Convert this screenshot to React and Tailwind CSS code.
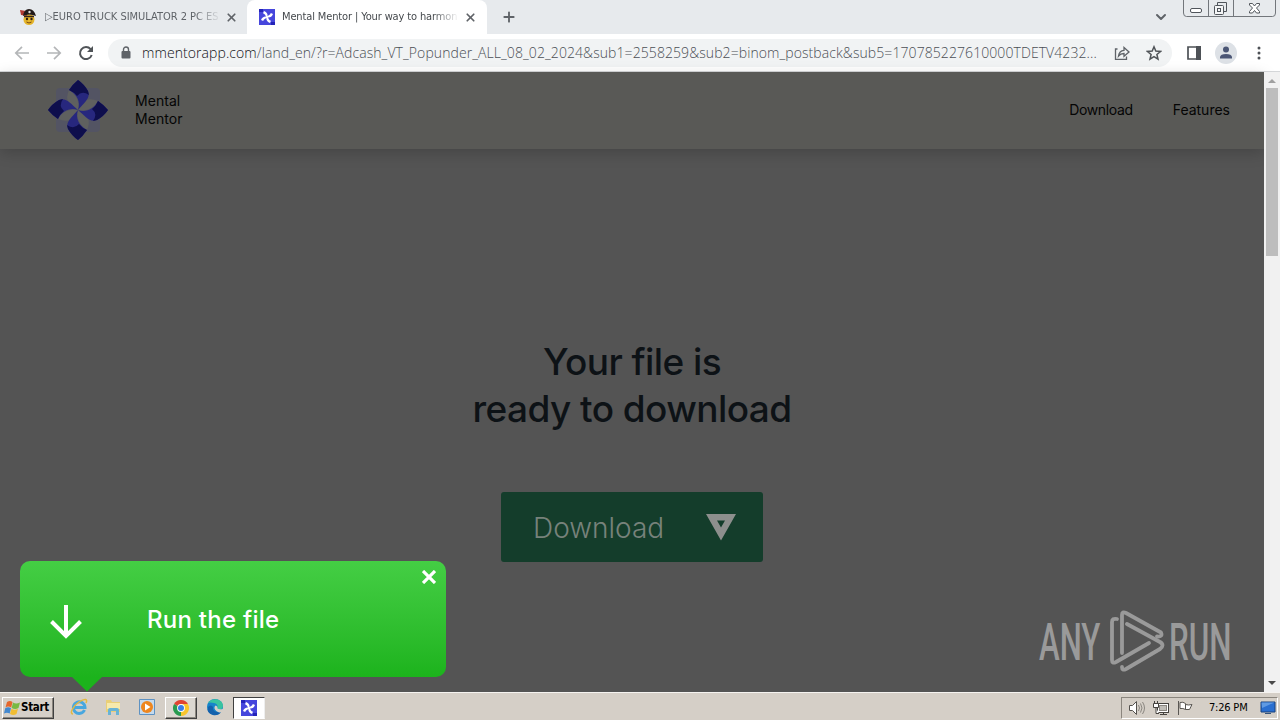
import { ChevronDown, Plus, X } from 'lucide-react';

const UI = 'font-["DejaVu_Sans_Condensed","DejaVu_Sans",sans-serif]';

const TURNS = [0, 90, 180, 270];

function Pinwheel({ className }) {
  return (
    <svg viewBox="0 0 60 60" className={className}>
      <rect x="8" y="8" width="44" height="44" rx="4" fill="#51536a" opacity=".7" />
      {TURNS.map(a => (
        <path key={a} d="M30 30C32 22 28 14 21 10Q18 17 20 22Q24 27 30 30Z" fill="#5f605f" transform={`rotate(${a} 30 30)`} />
      ))}
      {TURNS.map(a => (
        <g key={a} transform={`rotate(${a} 30 30)`}>
          <path d="M30 30C33 22 29 14 21 10Q25 4 30 0Q36 4 40 11C43 18 36 23 30 30Z" fill="#27277e" />
          <path d="M21 10Q25 4 30 0Q36 4 40 11L41 15Q34 10 29 16Q26 12 21 10Z" fill="#0e0e4c" />
        </g>
      ))}
    </svg>
  );
}

function AppBadge({ className }) {
  return (
    <svg viewBox="0 0 16 16" className={className}>
      <rect width="16" height="16" fill="#4646dc" />
      <path d="M0 0h4v3H0zM12 13h4v3h-4z" fill="#2424b8" />
      {TURNS.map(a => (
        <path key={a} d="M8.300 8.300C9.300 5.500 7.800 3 5 2L4 4.200C6 4.800 6.500 6.500 7.300 8.300Z" fill="#fff" transform={`rotate(${a} 8 8)`} />
      ))}
    </svg>
  );
}

function PirateIcon() {
  return (
    <svg viewBox="0 0 18 18" className="w-[18px] h-[18px] shrink-0">
      <circle cx="10" cy="11.500" r="5.500" fill="#e5b52b" />
      <path d="M1 2l6 1 1 5-6-1z" fill="#b13a32" />
      <path d="M4 8Q5 1 10 1Q15 1 17 8Q10 5 4 8Z" fill="#221a18" />
      <path d="M5 8.500h10" stroke="#362317" strokeWidth="1.500" />
      <circle cx="8" cy="11" r="1.200" fill="#2b1c10" />
      <circle cx="12.500" cy="11" r="1.200" fill="#2b1c10" />
      <path d="M7.500 14q2.500 2 5 0" stroke="#7a4a14" fill="none" />
      <circle cx="10.500" cy="4" r="1.200" fill="#ddd" />
    </svg>
  );
}

function TabStrip() {
  return (
    <div className="h-[34px] bg-[#e7eaed] flex items-start">
      <div className="w-[247px] h-[34px] pl-[19px] flex items-center">
        <PirateIcon />
        <div className="ml-2 w-[176px] whitespace-nowrap text-[11px] tracking-[-0.02px] text-[#5f6368] mask-r-from-85%">▷EURO TRUCK SIMULATOR 2 PC ES</div>
        <X className="ml-[4px] w-[13px] h-[13px] shrink-0 text-[#5f6368]" strokeWidth={3.2} />
      </div>
      <div className="w-[240px] h-[34px] bg-white rounded-t-lg pl-3 flex items-center">
        <AppBadge className="w-4 h-4 shrink-0" />
        <div className="ml-[7px] w-[177px] whitespace-nowrap text-[11px] tracking-[-0.13px] text-[#45494d] mask-r-from-85%">Mental Mentor | Your way to harmon</div>
        <X className="ml-[5px] w-[13px] h-[13px] shrink-0 text-[#5f6368]" strokeWidth={3.2} />
      </div>
      <Plus className="ml-3.5 mt-[9px] w-4 h-4 text-[#5f6368]" strokeWidth={2.8} />
      <div className="flex-1" />
      <ChevronDown className="mt-[9px] mr-[14px] w-4 h-4 text-[#5f6368]" strokeWidth={3} />
      <svg viewBox="0 0 94 18" className="w-[94px] h-[18px] mr-[3px]" fill="none" stroke="#72767b">
        <path d="M.5 0v13q0 3.500 3 3.500h86q3 0 3-3.500V0M25.500 0v16M50.500 0v16" />
        <g stroke="#50555b">
          <rect x="7.500" y="8.500" width="11" height="4" rx="1.500" fill="#fff" />
          <path d="M34.500 5V2.500h9v9H41" />
          <rect x="31.500" y="5.500" width="9" height="9" rx="1" fill="#f4f5f6" />
          <rect x="34.500" y="8.500" width="3" height="3" />
          <path d="M66.500 3.500h3l2 2.500 2-2.500h3v1.500L73.500 8l3 3.500v1.500h-3l-2-2.500-2 2.500h-3v-1.500l3-3.500-3-3z" fill="#fff" />
        </g>
      </svg>
    </div>
  );
}

function Toolbar() {
  return (
    <div className="h-[38px] bg-white border-b border-[#d5d7d9] flex items-center pl-[14px]">
      <svg viewBox="0 0 16 16" className="w-4 h-4" fill="none" stroke="#b4b6b8" strokeWidth="1.700"><path d="M15 8H2M8 1.800L1.800 8 8 14.200" /></svg>
      <svg viewBox="0 0 16 16" className="ml-4 w-4 h-4" fill="none" stroke="#b4b6b8" strokeWidth="1.700"><path d="M1 8h13M8 1.800L14.200 8 8 14.200" /></svg>
      <svg viewBox="0 0 16 16" className="ml-4 w-4 h-4" fill="none" stroke="#505458" strokeWidth="2"><path d="M13.700 10A6 6 0 1 1 12.600 4.200" /><path d="M15 1v6H9z" fill="#505458" stroke="none" /></svg>
      <div className="ml-[14px] w-[1064px] h-7 rounded-full bg-[#f1f3f4] flex items-center pl-[13px]">
        <svg viewBox="0 0 10 13" className="w-[10px] h-[13px] shrink-0"><rect x=".5" y="5" width="9" height="7.500" rx="1" fill="#5f6368" /><path d="M2.500 5.500V3.500a2.500 2.500 0 0 1 5 0v2" fill="none" stroke="#5f6368" strokeWidth="1.400" /></svg>
        <div className='ml-[11px] w-[960px] whitespace-nowrap font-["Open_Sans",sans-serif] font-light text-[14px] tracking-[0.08px] text-[#4b4f54]'>
          <span className="text-[#101114]">mmentorapp.com</span>/land_en/?r=Adcash_VT_Popunder_ALL_08_02_2024&sub1=2558259&sub2=binom_postback&sub5=170785227610000TDETV4232...
        </div>
        <svg viewBox="0 0 16 16" className="ml-[12px] w-4 h-4 shrink-0" fill="none" stroke="#5f6368" strokeWidth="1.300"><path d="M3.500 4H1.500v10.300h11V11.500" /><path d="M4.500 11C5 7 7 5.500 10 5.300V2.500l5 4.500-5 4.300V8.500C7.500 8.500 6 9 4.500 11Z" /></svg>
        <svg viewBox="0 0 16 16" className="ml-4 w-4 h-4 shrink-0" fill="none" stroke="#505458" strokeWidth="1.500"><path d="M8 1.800l1.800 4.300 4.700.4-3.600 3 1.100 4.600L8 11.600l-4 2.500 1.100-4.600-3.600-3 4.700-.4z" /></svg>
      </div>
      <svg viewBox="0 0 14 14" className="ml-[15px] w-[14px] h-[14px]"><path d="M1 1h12v12H1z" fill="none" stroke="#4d5156" strokeWidth="1.700" /><path d="M9 0h5v14H9z" fill="#4d5156" /></svg>
      <svg viewBox="0 0 22 22" className="ml-[14px] w-[22px] h-[22px]"><circle cx="11" cy="11" r="11" fill="#dde1e6" /><circle cx="11" cy="7.500" r="3" fill="#4b5675" /><path d="M5 16.500v-1.500Q5.500 12 11 12T17 15v1.500z" fill="#4b5675" /></svg>
      <svg viewBox="0 0 4 14" className="ml-[20px] w-[4px] h-[14px] fill-[#4d5156]"><circle cx="2" cy="2" r="1.500" /><circle cx="2" cy="7" r="1.500" /><circle cx="2" cy="12" r="1.500" /></svg>
    </div>
  );
}

function Landing() {
  return (
    <main className='flex-1 bg-[#545454] text-[#050505] font-["Inter",sans-serif]'>
      <header className="h-[77px] bg-[#595956] shadow-[0_4px_14px_rgba(0,0,0,0.18)] flex items-center pl-12 pr-[34px] pb-[2px]">
        <Pinwheel className="w-[60px] h-[60px]" />
        <div className="ml-[27px] text-[14px] leading-[18px] tracking-[0.05px]">Mental<br />Mentor</div>
        <nav className="ml-auto flex gap-10 text-[14px]">
          <span className="tracking-[-0.35px]">Download</span>
          <span>Features</span>
        </nav>
      </header>
      <section className="flex flex-col items-center pt-[189px]">
        <h1 className="text-center text-[37px] leading-[47px] tracking-[-0.58px] font-medium text-[#0d1216]">Your file is<br />ready to download</h1>
        <button className="mt-[60px] w-[262px] h-[70px] rounded-[3px] bg-[#143d2b] flex items-center justify-between pl-8 pr-[27px] text-[#77827b]">
          <span className="text-[28px] font-light mt-[2px]">Download</span>
          <svg viewBox="0 0 30 27" className="w-[30px] h-[27px]"><path fillRule="evenodd" d="M0 0h30L15 26.500zM11 6.500l4 7 4-7z" fill="#8d8f8d" /></svg>
        </button>
      </section>
    </main>
  );
}

function Scrollbar() {
  return (
    <div className="w-4 bg-[#f1f1f1] flex flex-col items-center">
      <svg viewBox="0 0 16 16" className="w-4 h-4"><path d="M4 11h8L8 7z" fill="#a0a0a0" /></svg>
      <div className="w-[12px] h-[168px] bg-[#bdbdbd]" />
      <div className="flex-1" />
      <svg viewBox="0 0 16 16" className="w-4 h-4"><path d="M4 5h8L8 9z" fill="#4a4a4a" /></svg>
    </div>
  );
}

function Balloon() {
  return (
    <div className="absolute left-[20px] top-[561px] w-[426px]">
      <div className='relative h-[116px] rounded-[10px] bg-linear-to-b from-[#44ce44] to-[#1cb31c] text-white font-["Inter",sans-serif] flex items-center pl-[30px]'>
        <svg viewBox="0 0 32 34" className="w-8 h-[34px] mt-[6px]" fill="none" stroke="#fff" strokeWidth="4"><path d="M16 0v31M1.500 16.500L16 31l14.500-14.500" /></svg>
        <span className="ml-[65px] mt-[1px] text-[24px] tracking-[0.25px] font-medium">Run the file</span>
        <svg viewBox="0 0 14 14" className="absolute right-[10px] top-[9px] w-[14px] h-[14px]" stroke="#fff" strokeWidth="3.200"><path d="M1 1l12 12M13 1L1 13" /></svg>
      </div>
      <svg viewBox="0 0 30 15" className="ml-[52px] w-[30px] h-[15px]"><path d="M0 0h30L15 14.500z" fill="#1cb31c" /></svg>
    </div>
  );
}

function Watermark() {
  return (
    <svg viewBox="0 0 194 62" className="absolute left-[1038px] top-[610px] w-[194px] h-[62px]">
      <g fill="#9a9a9a" className='font-["Roboto",sans-serif] font-medium' fontSize="52">
        <text transform="translate(1 49.500) scale(.59 1)" textLength="104" lengthAdjust="spacingAndGlyphs">ANY</text>
        <text transform="translate(131 49.500) scale(.59 1)" textLength="106" lengthAdjust="spacingAndGlyphs">RUN</text>
      </g>
      <g fill="none" stroke="#9a9a9a" strokeWidth="3.800" strokeLinejoin="round" strokeLinecap="round">
        <path d="M84 43V5Q84 1 88 3L123 22.500Q125 27 119 26.500" />
        <path d="M79 9Q74 8 74 12V50Q74 54 78 52L111 33" />
        <path d="M84 57Q84 61 88 59L122 39Q127 35 122 32L89 14" />
      </g>
    </svg>
  );
}

function WindowsFlag() {
  return (
    <svg viewBox="0 0 16 16" className="w-4 h-4">
      <path d="M3 2q3-2 5.500 0L7.200 7.500Q4 5.500 1.500 7.500z" fill="#e5672d" />
      <path d="M9 2.500q3 2 7 0l-1.500 5.500Q11 10 7.700 8z" fill="#78b943" />
      <path d="M1.200 8.200q3-2 5.800 0l-1.300 5.300Q3 12 0 13.500z" fill="#4388cf" />
      <path d="M7.500 8.700q3 2 6.500 0L12.500 14q-3 2-6.500 0z" fill="#f1bd32" />
    </svg>
  );
}

function Taskbar() {
  return (
    <footer className="h-7 bg-[#d5cfc7] border-t border-[#f5f3f0] flex items-center">
      <button className="ml-[2px] mt-[2px] w-[52px] h-[22px] border border-t-white border-l-white border-b-[#404040] border-r-[#404040] shadow-[inset_-1px_-1px_0_#8b867e] flex items-center pl-[1px] text-[11.500px] font-bold text-black">
        <WindowsFlag />
        <span className="ml-[1px] tracking-[-0.3px]">Start</span>
      </button>
      <svg viewBox="0 0 18 18" className="ml-[16px] w-[18px] h-[18px]" fill="none">
        <path d="M14.500 12A5.800 5.800 0 1 1 15 9.500H5" stroke="#48a7df" strokeWidth="3" />
        <path d="M3 16C-1 16 3 8 9 4C15 0 18 1 16 5" stroke="#e3b940" strokeWidth="1.500" />
      </svg>
      <svg viewBox="0 0 18 18" className="ml-4 w-[18px] h-[18px]">
        <path d="M2 2h5l1 2h8v10H2z" fill="#e9cf77" /><path d="M3 5h13v6H3z" fill="#f6e9ac" />
        <path d="M4 17v-5q0-2 2-2h7q2 0 2 2v5h-3v-4H7v4z" fill="#68b3d5" />
      </svg>
      <svg viewBox="0 0 18 18" className="ml-[16px] w-[18px] h-[18px]">
        <path d="M1.500 1.500h15v15h-15z" fill="#c5daed" stroke="#5e92c2" /><circle cx="9" cy="9" r="6" fill="#ee861e" /><path d="M7 5.500v7L12.500 9z" fill="#fff" />
      </svg>
      <div className="ml-[9px] mt-[2px] w-8 h-[22px] bg-[#dcd8d1] border border-t-white border-l-white border-b-[#404040] border-r-[#404040] shadow-[inset_-1px_-1px_0_#8b867e] flex items-center justify-center">
        <svg viewBox="0 0 16 16" className="w-4 h-4">
          <path d="M8 8L1.070 4A8 8 0 0 1 14.930 4z" fill="#df4432" /><path d="M8 8L1.070 4A8 8 0 0 0 8 16z" fill="#299b50" /><path d="M8 8V16A8 8 0 0 0 14.930 4H8z" fill="#f8c52c" />
          <circle cx="8" cy="8" r="3.900" fill="#fff" /><circle cx="8" cy="8" r="3" fill="#397de8" />
        </svg>
      </div>
      <svg viewBox="0 0 18 18" className="ml-[9px] w-[18px] h-[18px]">
        <circle cx="9" cy="9" r="8" fill="#1684ca" /><path d="M2 5C5-1 17 0 17 8q-1 5-6 3 2-5-3-6Q4 4 2 5Z" fill="#39c3a0" />
        <path d="M7 9q-1 6 8 5-3 4-8 3-7-2-5-8 3-3 5 0Z" fill="#1461ac" /><path d="M8.500 9q1-3 3 0-1 3 5.500 2l1 3q-3 1-6 0-4-2-3.500-5Z" fill="#d5cfc7" />
      </svg>
      <div className="ml-[9px] mt-[2px] w-8 h-[22px] bg-white border border-t-[#404040] border-l-[#404040] border-b-white border-r-[#eee] flex items-center justify-center">
        <AppBadge className="w-4 h-4" />
      </div>
      <div className="ml-auto mr-[2px] mt-[2px] w-[157px] h-[22px] border border-t-[#8b867e] border-l-[#8b867e] border-b-white border-r-white flex items-center pl-[7px] text-[11px] text-black">
        <svg viewBox="0 0 16 16" className="w-4 h-4" fill="#fff" stroke="#55524e"><path d="M.5 5.500h3l4-4v13l-4-4h-3z" /><path d="M9.500 5q2 3 0 6M11.500 3.500q3 4.500 0 9M13.500 2q4 6 0 12" fill="none" stroke="#8a8680" /></svg>
        <svg viewBox="0 0 16 16" className="ml-2 w-4 h-4" fill="#fff" stroke="#45423e"><rect x="4.500" y="3.500" width="11" height="9" fill="#fff" /><rect x="6.500" y="5.500" width="7" height="5" fill="#c0bdb7" stroke="#8a8680" /><path d="M7 14.500h7M10.500 13v2" /><path d="M.5 3.500h5v4h-5zM1.500 1v2M4.500 1v2M3 8v5.500h3" /></svg>
        <svg viewBox="0 0 16 16" className="ml-2 w-4 h-4" fill="#fff" stroke="#5a5753"><path d="M1.500 1v14M3 2.500q3-1 5.500 1v6Q6 8 3 8.500zM8.500 4.500q3 1 6.500 0L12.500 9.500h-4" /></svg>
        <span className="ml-[16px] mt-[1px] whitespace-nowrap tracking-[-0.2px]">7:26 PM</span>
        <svg viewBox="0 0 16 14" className="ml-auto mr-[1px] w-4 h-[14px]"><path d="M1 1h14v10H1z" fill="#2a6fd0" stroke="#18427e" /><path d="M1.500 1.500h13L2 7z" fill="#5f9ae3" /><path d="M5 12h6v1H5z" fill="#35547a" /></svg>
      </div>
    </footer>
  );
}

export default function App() {
  return (
    <div className={`relative w-[1280px] h-[720px] overflow-hidden flex flex-col ${UI}`}>
      <TabStrip />
      <Toolbar />
      <div className="flex-1 flex">
        <Landing />
        <Scrollbar />
      </div>
      <Taskbar />
      <Balloon />
      <Watermark />
    </div>
  );
}
